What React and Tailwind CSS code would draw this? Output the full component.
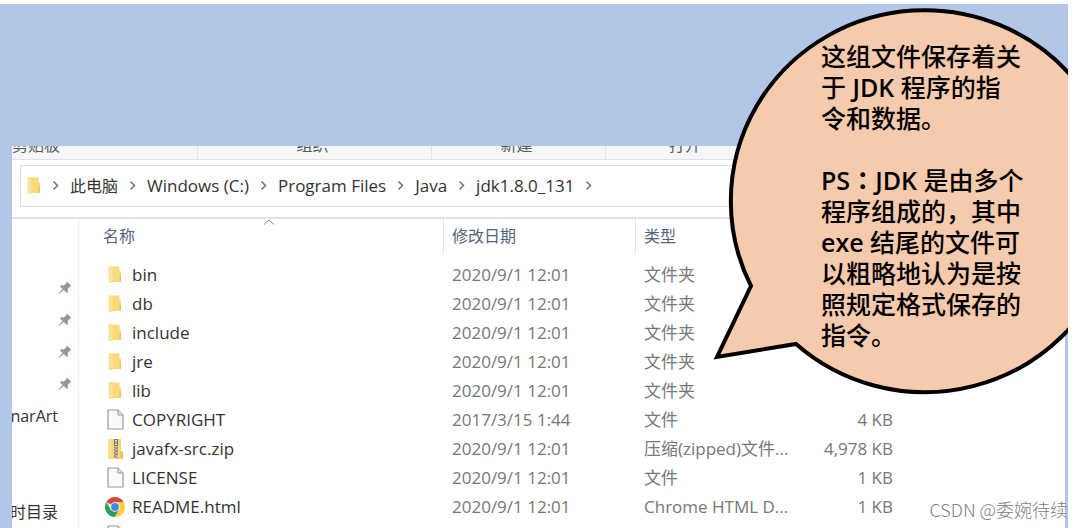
import React from 'react';

const files = [
  { name: 'bin', icon: 'folder', date: '2020/9/1 12:01', type: '文件夹', size: '' },
  { name: 'db', icon: 'folder', date: '2020/9/1 12:01', type: '文件夹', size: '' },
  { name: 'include', icon: 'folder', date: '2020/9/1 12:01', type: '文件夹', size: '' },
  { name: 'jre', icon: 'folder', date: '2020/9/1 12:01', type: '文件夹', size: '' },
  { name: 'lib', icon: 'folder', date: '2020/9/1 12:01', type: '文件夹', size: '' },
  { name: 'COPYRIGHT', icon: 'file', date: '2017/3/15 1:44', type: '文件', size: '4 KB' },
  { name: 'javafx-src.zip', icon: 'zip', date: '2020/9/1 12:01', type: '压缩(zipped)文件...', size: '4,978 KB' },
  { name: 'LICENSE', icon: 'file', date: '2020/9/1 12:01', type: '文件', size: '1 KB' },
  { name: 'README.html', icon: 'chrome', date: '2020/9/1 12:01', type: 'Chrome HTML D...', size: '1 KB' },
];

const path = ['Windows (C:)', 'Program Files', 'Java', 'jdk1.8.0_131'];

const FolderIcon = () => (
  <svg width="14" height="18" viewBox="0 0 14 18" className="shrink-0">
    <path d="M1 0.5h10.5v4.5l1.5 1v10H3L1 17z" fill="#f9d978" />
    <path d="M0.5 1l4 1.5v15L0.5 16z" fill="#fbe39a" />
    <path d="M11.5 9.5h1.5v6.5h-1.5z" fill="#efc25c" />
  </svg>
);

const FileIcon = () => (
  <svg width="17" height="21" viewBox="0 0 17 21" className="shrink-0">
    <path d="M1 1h10l5 5v14H1z" fill="#f8f9fa" stroke="#98999b" strokeWidth="1.2" />
    <path d="M11 1v5h5" fill="#e3e4e6" stroke="#98999b" strokeWidth="1" />
  </svg>
);

const ZipIcon = () => (
  <svg width="17" height="22" viewBox="0 0 17 22" className="shrink-0">
    <path d="M1 1h13v12l2 1v7H1z" fill="#f8d873" />
    <path d="M1 1h3v20H1z" fill="#fae298" />
    <path d="M13 13.5h3v7h-3z" fill="#ecc45d" />
    <path d="M7 1h4v19H7z" fill="#cfc8ae" />
    <path d="M7 9l4 2M7 12l4 2M7 15l4 2M7 18l4 2M11 9l-4 3M11 12l-4 3M11 15l-4 3" stroke="#77756b" strokeWidth="0.8" />
    <path d="M7.500 1.500h3v6h-3z" fill="#e4e4e0" stroke="#77756b" strokeWidth="1" />
    <path d="M9 3v3" stroke="#77756b" strokeWidth="1" />
  </svg>
);

const ChromeIcon = () => (
  <svg width="20" height="20" viewBox="0 0 20 20" className="shrink-0">
    <path d="M10 10L1.34 5A10 10 0 0 1 18.66 5z" fill="#d9493c" />
    <path d="M1.34 5A10 10 0 0 0 10 20l4.3-7.5L10 10 5.7 12.5z" fill="#2f9e58" />
    <path d="M18.66 5A10 10 0 0 1 10 20l4.3-7.5L10 5z" fill="#fbcd3c" />
    <circle cx="10" cy="10" r="4.8" fill="#f4f6f8" />
    <circle cx="10" cy="10" r="3.9" fill="#4a86e8" />
  </svg>
);

const PinIcon = () => (
  <svg width="14" height="14" viewBox="0 0 14 14">
    <path d="M9 0.5L13.5 5l-1.6 0.6-2.1 2.3 0.2 3.1-1 1L5.7 9 1 13 0.5 12.6 4.6 8 1.8 5.2l1-1 3.1 0.2 2.4-2.2z" fill="#8c98a3" />
  </svg>
);

const Chevron = () => (
  <svg width="13" height="14" viewBox="0 0 13 14" fill="none" stroke="#777" strokeWidth="1.6" className="shrink-0">
    <path d="M4.5 2.500l4 4-4 4" />
  </svg>
);

const icons = { folder: FolderIcon, file: FileIcon, zip: ZipIcon, chrome: ChromeIcon };

const Ribbon = () => (
  <div className="flex h-[14px] shrink-0 items-end overflow-hidden border-b border-[#e0e2e3] bg-[#f4f6f7] text-base leading-5 text-[#5a5a5a]">
    <div className="flex h-full w-[186px] items-end border-r border-[#dfe1e2] pb-1">剪贴板</div>
    <div className="flex h-full w-[234px] items-end justify-center border-r border-[#dfe1e2] pb-1 pr-1">组织</div>
    <div className="flex h-full w-[174px] items-end justify-center border-r border-[#dfe1e2] pb-1 pr-1">新建</div>
    <div className="flex h-full w-[158px] items-end justify-center pb-1">打开</div>
  </div>
);

const AddressBar = () => (
  <div className="shrink-0 border-b-2 border-[#e2e2e2] pb-[10px] pl-2 pt-[5px]">
    <nav className="flex h-[42px] items-center gap-2 border border-[#dcdcdc] pl-[6px] text-[17px] text-[#333]">
      <FolderIcon />
      <Chevron />
      <a href="#" className="whitespace-nowrap text-base">此电脑</a>
      <Chevron />
      {path.map((part) => (
        <React.Fragment key={part}>
          <a href="#" className="whitespace-nowrap">{part}</a>
          <Chevron />
        </React.Fragment>
      ))}
    </nav>
  </div>
);

const Sidebar = () => (
  <aside className="flex w-[67px] shrink-0 flex-col overflow-hidden border-r border-[#f0f0f0] pt-[53px] text-[#333]">
    {[0, 1, 2, 3].map((n) => (
      <div key={n} className="flex h-8 shrink-0 items-center justify-end pr-[6px]">
        <PinIcon />
      </div>
    ))}
    <div className="flex h-8 shrink-0 items-center justify-end whitespace-nowrap pr-5">narArt</div>
    <div className="h-16 shrink-0" />
    <div className="flex h-8 shrink-0 items-center justify-end whitespace-nowrap pr-5">时目录</div>
  </aside>
);

const FileTable = () => (
  <div className="min-w-0 flex-1 overflow-hidden">
    <table className="w-full table-fixed border-collapse text-left text-[17px] text-[#777]">
      <thead>
        <tr className="h-[41px] align-top text-base text-[#52647c]">
          <th className="relative w-[365px] p-0 font-normal">
            <div className="h-[34px] border-r border-[#e3e3e3] pl-6 leading-[34px]">名称</div>
            <svg width="12" height="6" viewBox="0 0 12 6" fill="none" stroke="#888" className="absolute left-[184px] top-0">
              <path d="M1 5.5l5-4.500 5 4.500" />
            </svg>
          </th>
          <th className="w-[192px] p-0 font-normal">
            <div className="h-[34px] border-r border-[#e3e3e3] pl-2 leading-[34px]">修改日期</div>
          </th>
          <th className="w-[192px] p-0 pl-2 font-normal leading-[34px]">类型</th>
          <th className="w-[73px] p-0"></th>
          <th className="p-0"></th>
        </tr>
      </thead>
      <tbody>
        {files.map((file) => {
          const Icon = icons[file.icon];
          return (
            <tr key={file.name} className="h-[29px] whitespace-nowrap">
              <td className="p-0 pl-[27px]">
                <div className="flex items-center text-[#333]">
                  <span className="flex w-[18px] justify-center"><Icon /></span>
                  <span className="pl-2">{file.name}</span>
                </div>
              </td>
              <td className="p-0 pl-2">{file.date}</td>
              <td className="p-0 pl-2">{file.type}</td>
              <td className="p-0">
                <div className="flex justify-end pr-2">{file.size}</div>
              </td>
              <td className="p-0"></td>
            </tr>
          );
        })}
        <tr className="h-[29px]">
          <td className="p-0 pl-[27px]" colSpan={5}>
            <span className="flex w-[18px] justify-center"><FileIcon /></span>
          </td>
        </tr>
      </tbody>
    </table>
  </div>
);

const Balloon = () => (
  <div className="absolute right-0 top-0 w-[356px] overflow-hidden">
    <svg width="356" height="400" viewBox="712 4 356 400" className="absolute left-0 top-0">
      <path
        d="M751 286L717 357 796 344A194 191 0 1 0 751 286z"
        fill="#f6caac"
        stroke="#000"
        strokeWidth="4"
      />
    </svg>
    <div className="relative h-[400px] whitespace-nowrap pl-[109px] pt-[37px] text-[25px] font-medium leading-[31px] text-black">
      <p>这组文件保存着关</p>
      <p>于 <b className="font-semibold">JDK</b> 程序的指</p>
      <p>令和数据。</p>
      <br />
      <p>
        <b className="font-semibold">PS</b>
        <b className="font-['Noto_Sans_CJK_TC',sans-serif] leading-none">：</b>
        <b className="font-semibold">JDK</b> 是由多个
      </p>
      <p>程序组成的，其中</p>
      <p><b className="font-semibold">exe</b> 结尾的文件可</p>
      <p>以粗略地认为是按</p>
      <p>照规定格式保存的</p>
      <p>指令。</p>
    </div>
  </div>
);

export default function App() {
  return (
    <div className="flex h-screen flex-col overflow-hidden bg-white pr-[14px] pt-1 font-['Open_Sans','Noto_Sans_CJK_SC',sans-serif] text-base">
      <div className="relative flex min-h-0 flex-1 flex-col overflow-hidden bg-[#b4c6e7] pl-3 pr-[3px] pt-[142px]">
        <div className="flex min-h-0 flex-1 flex-col overflow-hidden bg-white leading-6">
          <Ribbon />
          <AddressBar />
          <div className="flex min-h-0 flex-1">
            <Sidebar />
            <FileTable />
          </div>
        </div>
        <Balloon />
        <span className="absolute bottom-[7px] right-0 whitespace-nowrap font-['Noto_Sans_CJK_SC',sans-serif] text-lg leading-6 font-light text-[#808080]">
          CSDN @委婉待续
        </span>
      </div>
    </div>
  );
}
